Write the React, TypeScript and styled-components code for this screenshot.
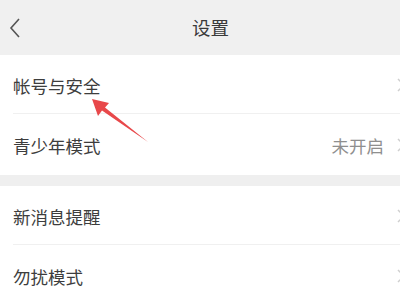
import React from "react";
import styled, { createGlobalStyle } from "styled-components";

const Global = createGlobalStyle`
  html, body { margin: 0; padding: 0; background: #efefef; }
  body { font-family: "Noto Sans CJK SC", "Noto Sans", sans-serif; }
`;

const Page = styled.div`
  position: relative;
  width: 400px;
  height: 300px;
  overflow: hidden;
  background: #efefef;
  display: flex;
  flex-direction: column;
`;

const Header = styled.div`
  height: 55px;
  display: grid;
  grid-template-columns: 40px 1fr 40px;
  align-items: center;
  background: #f0f0f0;
  flex-shrink: 0;
`;

const Back = styled.div`
  display: flex;
  align-items: center;
  padding-left: 9px;
  padding-top: 1px;
`;

const Title = styled.div`
  text-align: center;
  font-size: 18.5px;
  color: #3a3a3a;
  padding-left: 21px;
  padding-bottom: 1px;
`;

const Section = styled.div<{ $gapAfter?: number }>`
  background: #fff;
  display: flex;
  flex-direction: column;
  margin-bottom: ${(p) => p.$gapAfter ?? 0}px;
  flex-shrink: 0;
`;

const Row = styled.div<{ $h: number; $divider?: boolean }>`
  height: ${(p) => p.$h}px;
  display: flex;
  align-items: center;
  padding-left: 13px;
  position: relative;
  ${(p) =>
    p.$divider
      ? `&::after { content: ""; position: absolute; left: 13px; right: 0; bottom: 0; height: 1px; background: #f0f0f0; }`
      : ""}
`;

const Label = styled.div`
  flex: 1;
  font-size: 17.5px;
  color: #3d3d3d;
  line-height: 1;
  padding-top: 2px;
`;

const Value = styled.div`
  font-size: 17.5px;
  color: #8f8f8f;
  line-height: 1;
  margin-right: 12px;
  padding-top: 2px;
`;

const Chevron = styled.svg`
  width: 10px;
  height: 14px;
  margin-right: -6px;
  flex-shrink: 0;
`;

const ArrowLayer = styled.svg`
  position: absolute;
  left: 0;
  top: 0;
  pointer-events: none;
`;

const RightChevron = () => (
  <Chevron viewBox="0 0 10 14">
    <path d="M2 1 L8 7 L2 13" fill="none" stroke="#cfcfcf" strokeWidth="1.5" />
  </Chevron>
);

export default function App() {
  return (
    <>
      <Global />
      <Page>
        <Header>
          <Back>
            <svg width="12" height="20" viewBox="0 0 12 20">
              <path d="M10 1 L2 10 L10 19" fill="none" stroke="#555" strokeWidth="1.6" />
            </svg>
          </Back>
          <Title>设置</Title>
          <div />
        </Header>
        <Section $gapAfter={11}>
          <Row $h={59} $divider>
            <Label>帐号与安全</Label>
            <RightChevron />
          </Row>
          <Row $h={61}>
            <Label>青少年模式</Label>
            <Value>未开启</Value>
            <RightChevron />
          </Row>
        </Section>
        <Section>
          <Row $h={59} $divider>
            <Label>新消息提醒</Label>
            <RightChevron />
          </Row>
          <Row $h={62}>
            <Label>勿扰模式</Label>
            <RightChevron />
          </Row>
        </Section>
        <ArrowLayer width="400" height="300" viewBox="0 0 400 300">
          <path d="M92 99 L109 103 L105 107.5 L148 142 L102 110.5 L98 116 Z" fill="#e8484a" />
        </ArrowLayer>
      </Page>
    </>
  );
}
